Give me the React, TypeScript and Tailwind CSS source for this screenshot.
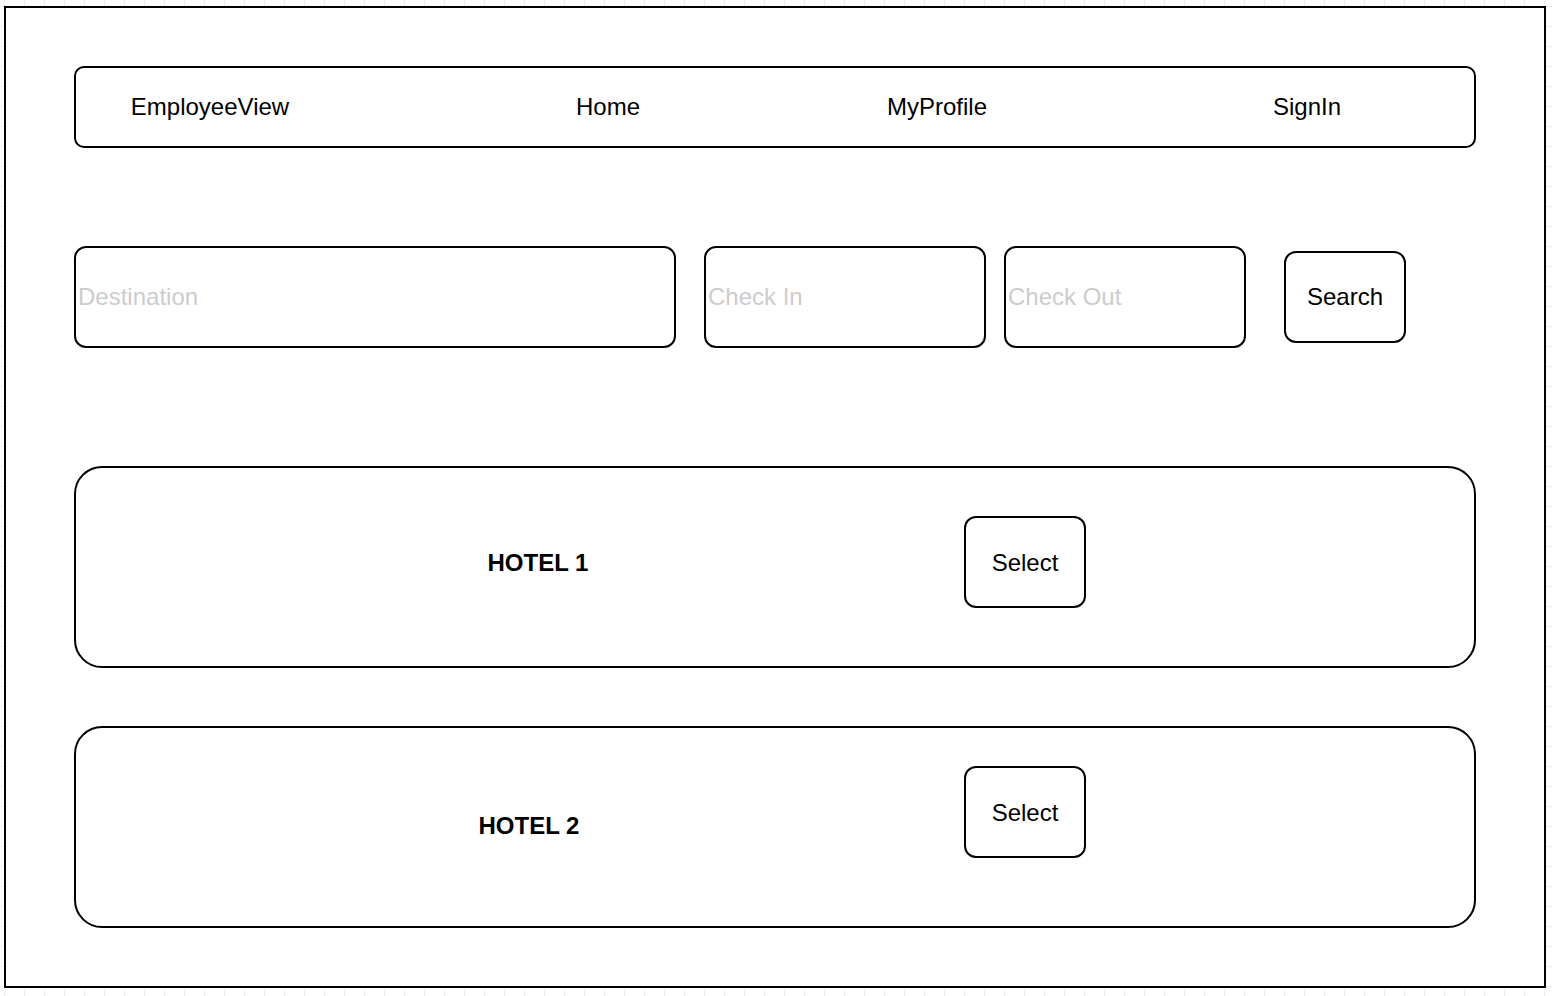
import React from "react";

const font = { fontFamily: '"Liberation Sans", Helvetica, Arial, sans-serif' };

function Hotel({ name, textTop, textLeft, btnTop, btnLeft, first }: { name: string; textTop: string; textLeft: string; btnTop: string; btnLeft: string; first?: boolean }) {
  return (
    <div
      className={`ml-[68px] w-[1402px] h-[202px] border-2 border-black rounded-[28px] flex items-start ${first ? "mt-[118px]" : "mt-[58px]"}`}
    >
      {/* hotel title */}
      <div className={`w-[160px] h-[92px] flex items-center justify-center font-bold text-[24px] ${textTop} ${textLeft}`}>
        {name}
      </div>
      <button className={`w-[122px] h-[92px] pt-[2px] border-2 border-black rounded-[12px] text-[24px] ${btnTop} ${btnLeft}`}>
        Select
      </button>
    </div>
  );
}

export default function App() {
  return (
    <div
      className="w-full h-[996px] overflow-hidden pt-[6px] pl-[4px] bg-white bg-[linear-gradient(to_right,#ececec_1px,transparent_1px),linear-gradient(to_bottom,#ececec_1px,transparent_1px)] bg-[size:20px_20px] bg-[position:4px_6px]"
      style={font}
    >
      <div className="w-[1542px] h-[982px] border-2 border-black bg-white text-black">
        {/* Nav bar */}
        <div className="ml-[68px] mt-[58px] w-[1402px] h-[82px] border-2 border-black rounded-[10px] flex items-center text-[24px]">
          <div className="w-[160px] text-center ml-[54px]">EmployeeView</div>
          <div className="w-[160px] text-center ml-[238px]">Home</div>
          <div className="w-[160px] text-center ml-[169px]">MyProfile</div>
          <div className="w-[160px] text-center ml-[210px]">SignIn</div>
        </div>

        {/* Search row */}
        <div className="ml-[68px] mt-[98px] flex items-center text-[24px]">
          <div className="w-[602px] h-[102px] border-2 border-black rounded-[12px] flex items-center pl-[2px] text-[#cccccc]">
            Destination
          </div>
          <div className="ml-[28px] w-[282px] h-[102px] border-2 border-black rounded-[12px] flex items-center pl-[2px] text-[#cccccc]">
            Check In
          </div>
          <div className="ml-[18px] w-[242px] h-[102px] border-2 border-black rounded-[12px] flex items-center pl-[2px] text-[#cccccc]">
            Check Out
          </div>
          <button className="ml-[38px] w-[122px] h-[92px] border-2 border-black rounded-[12px] text-black">
            Search
          </button>
        </div>

        {/* Hotels */}
        <Hotel name="HOTEL 1" first textTop="mt-[49px]" textLeft="ml-[382px]" btnTop="mt-[48px]" btnLeft="ml-[346px]" />
        <Hotel name="HOTEL 2" textTop="mt-[52px]" textLeft="ml-[373px]" btnTop="mt-[38px]" btnLeft="ml-[355px]" />
      </div>
    </div>
  );
}
